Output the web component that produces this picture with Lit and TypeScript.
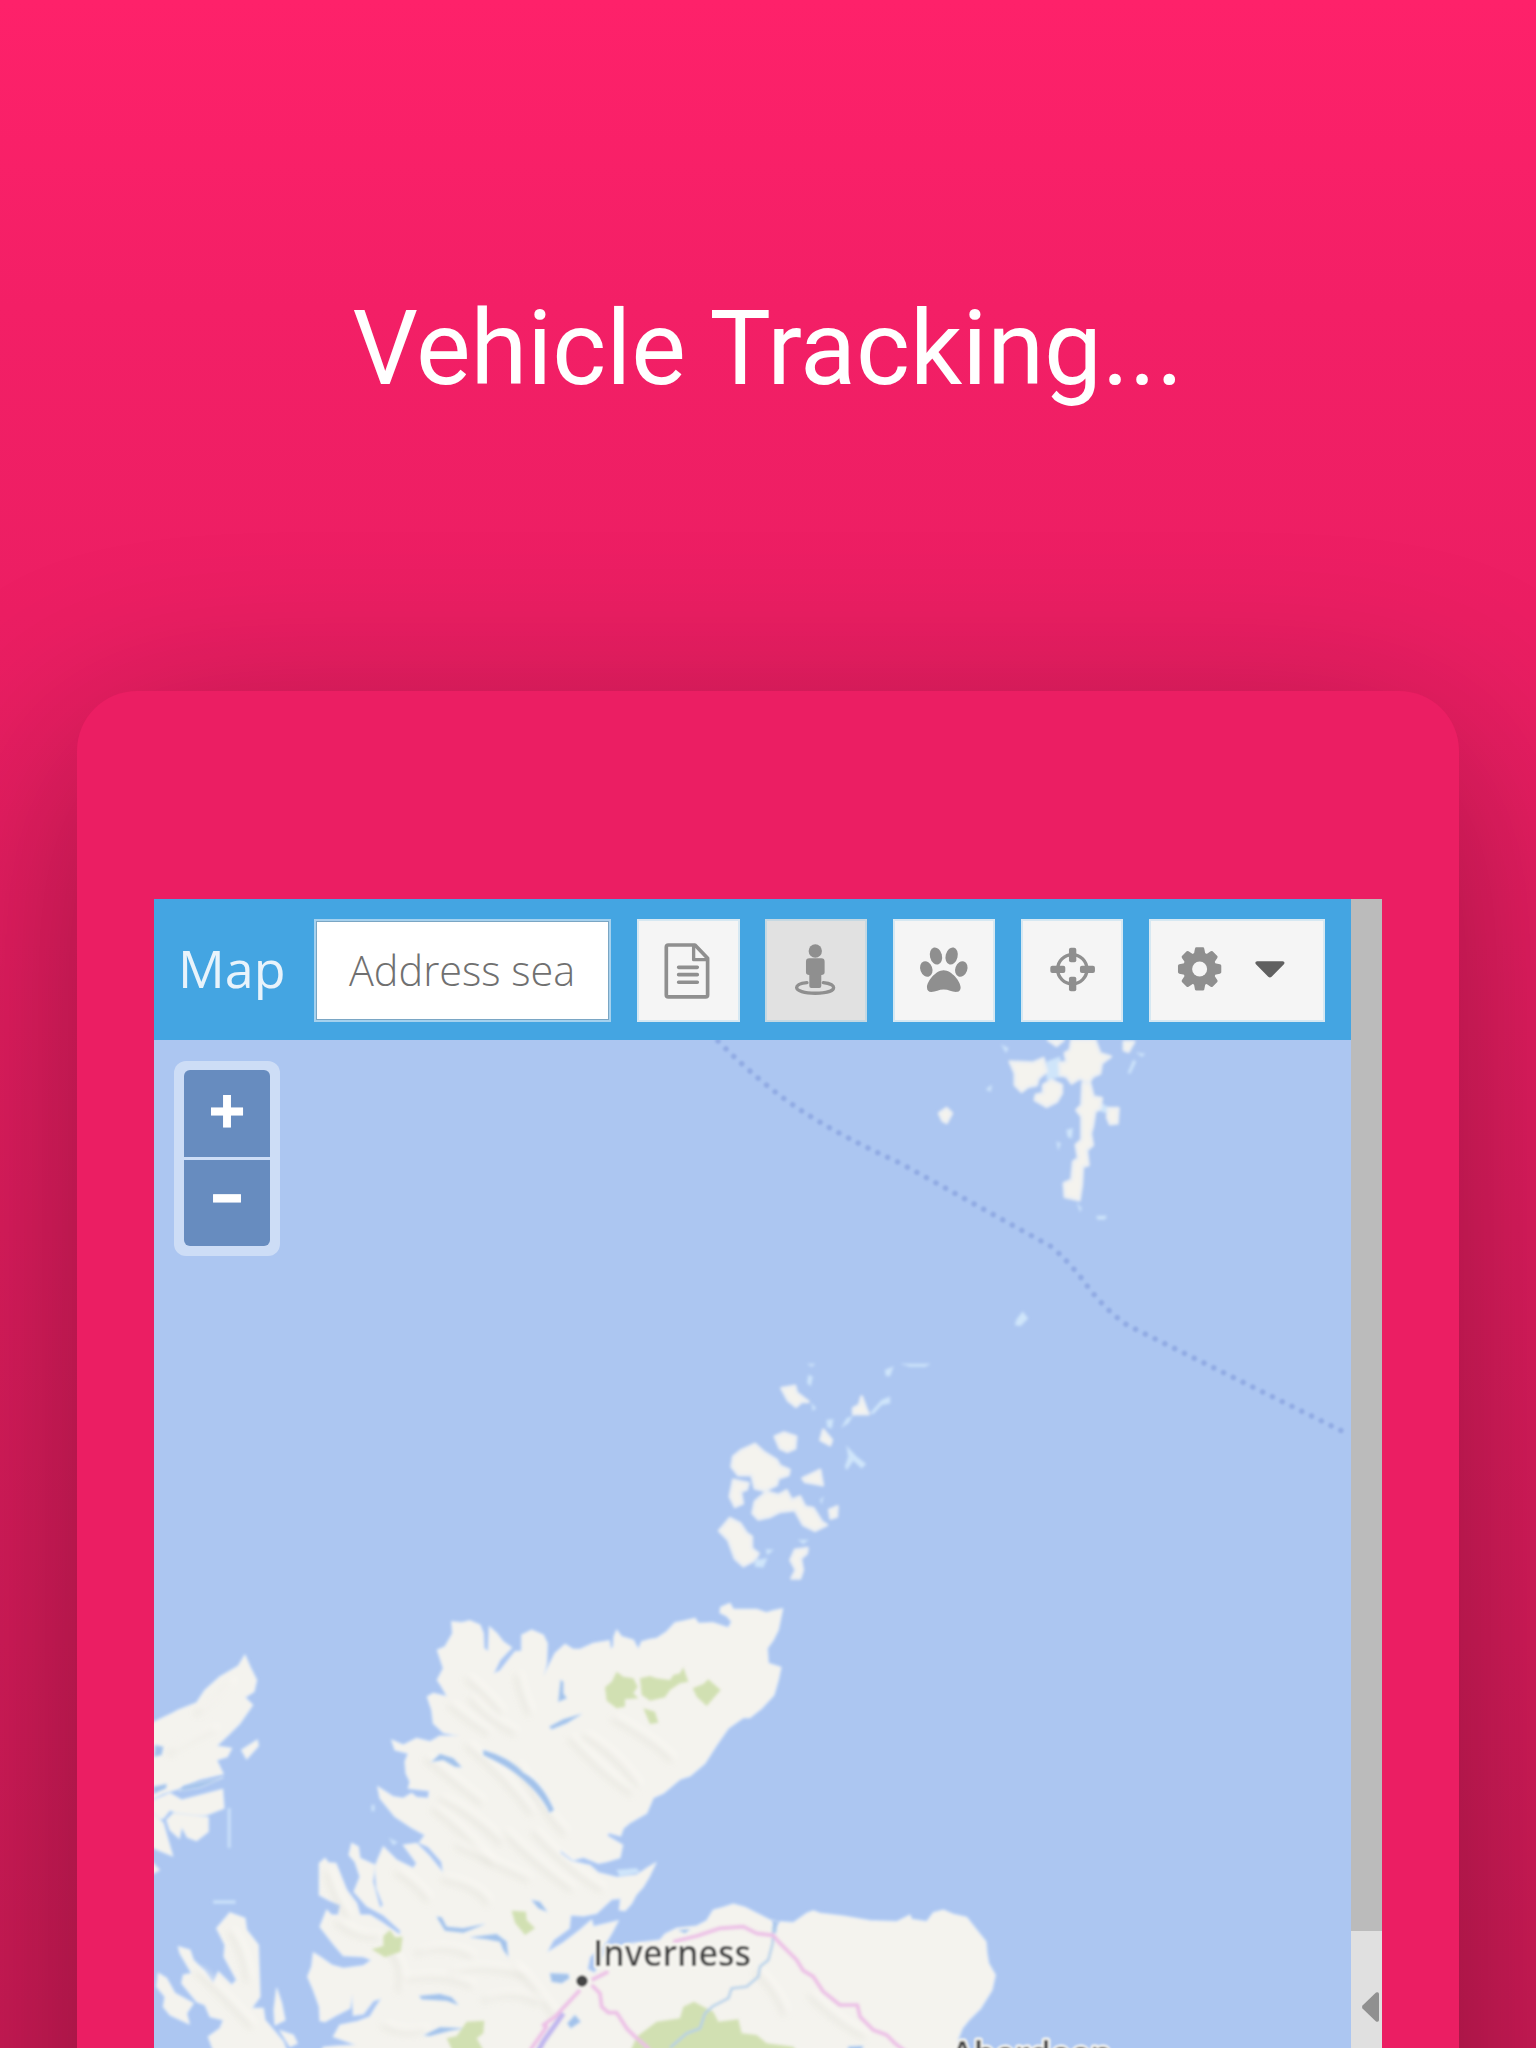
import { LitElement, html, css, svg } from "lit";
import { customElement } from "lit/decorators.js";

const MAINLAND =
  "M905,125L935,128 960,122 990,135 1000,160 1002,205 1015,215 1018,140 1040,160 1060,185 1085,203 1050,240 1030,282 1050,272 1095,215 1115,213 1115,165 1145,150 1180,165 1192,190 1190,250 1180,290 1200,250 1215,220 1245,193 1268,207 1290,208 1330,190 1378,182 1382,208 1390,200 1392,170 1400,150 1415,170 1450,180 1465,208 1475,185 1500,178 1520,175 1550,155 1575,128 1600,123 1635,115 1645,130 1690,128 1735,143 1745,125 1730,108 1710,98 1712,82 1740,70 1750,88 1820,88 1850,98 1870,92 1898,86 1885,150 1870,180 1852,205 1855,250 1893,262 1885,300 1872,345 1835,385 1800,413 1780,413 1735,445 1700,495 1665,550 1620,588 1590,598 1540,640 1510,653 1490,700 1440,728 1420,745 1412,768 1375,758 1372,768 1418,795 1410,833 1370,845 1345,850 1300,832 1270,840 1238,815 1230,808 1232,822 1265,845 1320,856 1345,878 1400,892 1460,885 1490,865 1518,848 1498,890 1480,920 1458,945 1445,970 1425,992 1408,990 1412,955 1385,958 1340,1000 1300,1008 1262,1005 1258,1045 1210,1080 1190,1118 1240,1088 1290,1050 1325,1020 1330,1040 1405,1022 1385,1060 1368,1088 1320,1130 1312,1168 1335,1180 1345,1150 1370,1120 1430,1092 1530,1080 1545,1062 1580,1045 1640,1038 1670,1022 1690,990 1720,982 1750,972 1785,982 1820,1000 1865,1022 1880,1040 1890,1025 1930,1028 1970,1000 1990,992 2010,1000 2080,1008 2160,1022 2240,1025 2280,1005 2285,1018 2330,1025 2350,998 2380,990 2410,1003 2450,1012 2480,1050 2508,1085 2511,1120 2516,1150 2536,1185 2526,1230 2492,1285 2457,1320 2437,1345 2425,1375 2425,1440 500,1440 520,1402 560,1398 620,1395 550,1370 570,1335 620,1325 660,1310 675,1285 695,1255 670,1262 640,1302 610,1306 607,1240 600,1285 555,1308 525,1325 510,1322 508,1280 490,1230 473,1190 485,1160 490,1118 510,1130 545,1155 580,1165 640,1157 665,1140 640,1130 580,1127 550,1092 525,1060 510,1040 530,990 545,1005 565,1005 572,975 540,962 508,945 508,850 525,835 535,848 558,850 590,930 620,970 630,1005 660,1005 700,1030 750,1065 752,1052 700,1005 650,978 612,935 630,890 615,845 597,825 605,790 625,800 630,835 675,855 668,905 690,985 700,975 680,925 675,860 685,835 700,800 740,840 790,865 800,850 760,795 800,790 840,830 880,880 875,845 835,800 808,788 825,765 780,740 735,710 690,655 683,620 730,650 760,655 785,640 800,652 835,655 838,632 775,625 780,605 768,580 765,545 775,520 735,510 725,480 760,495 800,475 840,485 870,468 930,468 880,458 850,430 845,390 832,350 850,340 892,350 875,320 862,300 880,265 862,210 885,200 908,160Z";

const ISLES = [
  // Lewis and Harris
  "M0,432L70,398 85,390 140,368 165,330 210,290 265,258 285,225 300,260 320,300 312,335 285,352 308,375 270,430 235,465 200,498 245,505 232,530 200,540 220,582 150,598 90,625 40,640 0,660Z",
  "M0,665L60,640 95,660 218,628 222,685 170,705 100,708 60,690 40,715 0,720Z",
  "M70,700L175,712 175,755 140,782 112,772 95,740 88,775 60,750 50,720Z",
  "M0,690L40,730 68,828 30,812 0,800ZM0,840L28,870 0,885Z",
  "M275,510L322,480 325,498 290,537Z",
  // Skye
  "M200,1045L240,998 285,1015 290,1050 325,1095 330,1250 305,1285 340,1285 345,1320 400,1385 420,1440 200,1440 175,1370 210,1345 220,1320 180,1310 165,1275 140,1265 95,1210 100,1185 125,1180 90,1120 85,1100 120,1110 130,1140 165,1175 190,1210 205,1175 245,1215 260,1200 222,1130 225,1095Z",
  "M25,1180L50,1195 75,1240 130,1270 110,1300 118,1332 60,1305 40,1280 45,1250 20,1220Z",
  "M380,1225L395,1270 405,1320 375,1335 372,1290ZM390,1352L430,1365 442,1390 420,1400Z",
];

const ORKNEY = [
  "M225,312L250,335 290,360 300,378 328,390 325,405 295,415 290,435 255,452 225,445 215,405 175,405 155,380 160,350 185,330Z",
  "M160,420L205,430 200,448 182,455 188,490 165,500 150,470Z",
  "M225,485L260,455 295,465 320,452 335,480 360,470 375,500 400,505 425,545 440,555 405,572 370,555 345,510 300,515 270,530 235,538 218,520Z",
  "M118,572L150,535 180,550 200,580 215,590 215,625 235,640 225,660 190,678 165,655 145,600Z",
  "M305,145L345,138 350,158 385,185 365,185 348,200 325,182Z",
  "M285,290L312,278 348,290 345,325 322,335 300,325Z",
  "M345,630L382,625 380,640 362,655 368,690 360,715 335,715 348,690 332,660Z",
  "M368,415L395,402 420,390 428,435 400,430 375,425Z",
  "M545,170L558,205 565,222 520,222 520,205 538,195ZM430,270L455,300 450,315 422,300ZM448,510L472,500 470,530 452,535Z",
];

const ORKNEY_FAINT = [
  "M385,105L398,110 392,138 382,130ZM440,240L460,238 455,265 442,262ZM500,318L530,350 558,372 545,385 520,362 500,390 495,380 505,350Z",
  "M485,262L500,235 518,228 505,250ZM570,220L605,180 630,170 630,190 605,195 580,222ZM665,72L750,72 735,80 690,80ZM615,90L640,80 630,108 618,108Z",
  "M225,660L262,655 250,682 225,680ZM258,628L280,630 262,645ZM395,190L408,205 398,212ZM355,600L385,600 370,612ZM420,480L430,470 425,492ZM383,72L405,72 395,80Z",
];

const SHETLAND = [
  "M515,30L585,30 600,70 632,80 605,100 600,130 578,140 565,160 540,145 515,160 500,140 480,135 478,100 500,95 495,70 510,60Z",
  "M330,95L400,98 430,85 440,125 415,145 410,165 385,170 365,185 345,165 345,130Z",
  "M430,165L455,150 485,165 485,190 470,215 440,230 405,210 408,195 430,190Z",
  "M548,160L570,160 580,200 605,205 600,235 585,245 578,290 572,310 578,345 560,360 565,405 548,410 545,465 538,510 495,500 492,460 515,450 520,395 535,385 528,345 545,330 545,260 530,240 545,225Z",
  "M625,235L655,235 652,280 630,282 622,262ZM672,35L702,35 685,65 672,60ZM445,30L490,30 470,47Z",
  "M118,250L140,235 155,250 140,278 128,272Z",
];

const SHETLAND_FAINT = [
  "M350,868L368,845 384,865 362,888 345,885ZM500,300L518,295 515,325 503,320ZM470,335L482,340 475,360ZM305,45L325,55 318,68ZM590,558L620,558 615,568 592,568ZM532,520L545,535 540,545Z",
  "M700,90L708,95 690,132 684,128ZM710,68L735,72 725,80ZM258,178L275,165 272,185ZM440,95L480,80 485,140 440,150ZM590,210L630,235 620,250 590,240Z",
];

const FORESTS = [
  "M1365,322L1385,305 1400,275 1420,290 1450,295 1463,320 1450,340 1465,355 1425,358 1425,380 1400,385 1370,362Z",
  "M1470,295L1500,288 1520,295 1560,300 1570,285 1590,280 1600,262 1615,305 1590,310 1560,330 1545,352 1500,362 1475,345Z",
  "M1628,325L1660,312 1675,298 1712,330 1670,378 1640,350ZM1480,385L1515,395 1525,428 1500,432Z",
  "M700,1068L720,1050 735,1072 758,1070 752,1115 705,1132 665,1108 700,1098ZM1085,992L1128,995 1130,1020 1155,1045 1125,1065 1095,1028Z",
  "M890,1375L920,1368 950,1325 1003,1322 1000,1360 980,1375 1000,1410 985,1440 920,1440Z",
  "M1430,1440L1460,1370 1520,1325 1590,1315 1600,1280 1632,1265 1660,1280 1690,1295 1705,1325 1765,1318 1775,1360 1820,1365 1850,1390 1930,1400 1960,1440Z",
];

const LOCHS = [
  "M1000,510C1050,525 1090,545 1120,578C1165,600 1195,650 1212,690L1198,698C1185,665 1150,625 1115,595C1075,560 1040,545 1000,525Z",
  "M1232,300L1240,305 1240,340 1250,355 1225,365ZM1198,440L1240,418 1295,402 1250,430 1205,448Z",
  "M845,545L870,522 910,535 935,562 915,560 880,540ZM1145,960L1170,965 1192,995 1165,985Z",
  "M860,1010L875,1012 890,1040 940,1045 1005,1032 940,1058 885,1052ZM960,1072L1040,1062 1070,1085 1075,1130 1060,1110 1050,1085 1010,1078Z",
  "M808,1248L870,1242 905,1252 925,1275 890,1262 815,1258ZM822,1366L870,1342 940,1345 900,1352 840,1368Z",
  "M1200,1180L1255,1182 1258,1195 1235,1210 1205,1205ZM1275,1305L1292,1325 1262,1345 1252,1330Z",
  "M15,495L40,500 35,525 12,530ZM10,620L50,612 48,625 10,642ZM100,618L220,592 150,622 90,632Z",
  "M1870,1020L1882,1025 1878,1060 1868,1055ZM1585,1050L1620,1048 1605,1060Z",
  "M2095,1400L2140,1398 2120,1440 2090,1440Z",
];

const RIDGES = [
  "M950,300Q1000,340 1050,400", "M1100,290Q1105,330 1135,400", "M960,360Q1010,420 1090,460", "M900,380Q960,430 1010,460",
  "M830,540Q900,600 990,670", "M950,500Q1060,590 1140,700", "M870,660Q960,700 1050,790", "M850,690Q930,750 1020,850",
  "M740,880Q790,910 830,960", "M880,900Q980,920 1010,970", "M920,800Q1020,850 1130,900", "M1060,760Q1150,850 1260,930",
  "M720,1120Q760,1160 745,1230", "M800,1120Q880,1090 960,1130", "M760,1200Q880,1180 960,1220", "M900,1180Q1010,1150 1120,1190",
  "M700,1340Q760,1370 820,1350", "M1000,1260Q1090,1230 1160,1270", "M1100,560Q1180,700 1240,760", "M1260,480Q1360,590 1440,640",
  "M1300,470Q1390,520 1460,620", "M1390,420Q1500,480 1560,540", "M1150,760Q1250,870 1350,930", "M140,400Q190,370 240,310",
  "M60,520Q120,480 190,450", "M240,1060Q280,1120 290,1200", "M140,1180Q200,1230 300,1340", "M530,880Q550,950 590,1010",
  "M560,1030Q620,1080 680,1070", "M1090,1160Q1150,1220 1210,1310", "M1980,1250Q2060,1330 2140,1370", "M1820,1180Q1880,1240 1900,1300",
];

const paths = (ds: string[], cls: string) => ds.map((d) => svg`<path class=${cls} d=${d} />`);

@customElement("coast-map")
export class CoastMap extends LitElement {
  static styles = css`
    :host { display: block; height: 1008px; }
    svg { display: block; width: 1197px; height: 1008px; background: #acc6f1; }
    .land { fill: #f4f3ee; stroke: #d3e5fb; stroke-width: 5; paint-order: stroke; stroke-linejoin: round; }
    .islet { fill: #f4f3ee; stroke: #ebeff3; stroke-width: 9; stroke-linejoin: round; }
    .faint { fill: #cfe5fa; stroke: #c2daf8; stroke-width: 3; }
    .loch { fill: #a3c2ea; stroke: #e4effa; stroke-width: 4; paint-order: stroke; }
    .forest { fill: #d1e0b2; }
    .ridge { fill: none; stroke: #cfcfc6; stroke-width: 12; stroke-linecap: round; opacity: 0.36; }
    .glow { fill: none; stroke: #fffefa; stroke-width: 14; stroke-linecap: round; opacity: 0.5; }
    .road { fill: none; stroke: #ecbfe6; stroke-width: 11; stroke-linejoin: round; }
    .river { fill: none; stroke: #b4cfea; stroke-width: 7; stroke-linejoin: round; }
    .ness { fill: none; stroke: #bfb5ee; stroke-width: 15; }
    .border { fill: none; stroke: #8aa4e0; stroke-width: 5.5; stroke-linecap: round; stroke-dasharray: 0.1 10.8; opacity: 0.8; }
    .place { font: 600 35.5px "Open Sans", "Noto Sans", sans-serif; fill: #404040; stroke: #f7f6f1; stroke-width: 5; paint-order: stroke; stroke-linejoin: round; }
    .dot { fill: #444; stroke: #f7f6f1; stroke-width: 1.5; }
  `;

  render() {
    return html`<svg viewBox="154 1040 1197 1008">
      <defs>
        <filter id="soft" x="-2%" y="-2%" width="104%" height="104%"><feGaussianBlur stdDeviation="4" /></filter>
        <filter id="softer" x="-5%" y="-5%" width="110%" height="110%"><feGaussianBlur stdDeviation="9" /></filter>
        <filter id="type" x="-5%" y="-20%" width="110%" height="140%"><feGaussianBlur stdDeviation="1" /></filter>
      </defs>
      <path class="border" filter="url(#type)" d="M718,1041Q762,1085 802,1111T900,1163L1052,1247Q1072,1265 1085,1283Q1105,1310 1127,1325L1348,1434" />
      <g transform="translate(150 1580) scale(.33333)">
        <g filter="url(#soft)">
          <path class="land" d=${MAINLAND} />
          ${paths(ISLES, "land")}
          <path class="faint" d="M234,685h7v118h-7ZM190,962h66v8h-66ZM718,775l24,12-12,8ZM665,675h8v18h-8ZM1400,870l60,-5 10,12 -60,12Z" />
        </g>
        <g filter="url(#softer)">
          ${paths(RIDGES, "ridge")}
          <g transform="translate(14 -12)">${paths(RIDGES, "glow")}</g>
        </g>
        <g filter="url(#soft)">
          ${paths(LOCHS, "loch")}
          ${paths(FORESTS, "forest")}
          <path class="river" d="M1870,1040L1868,1090 1855,1140 1830,1160 1825,1190 1790,1220 1745,1225 1735,1255 1690,1278 1665,1300 1650,1345 1610,1360 1560,1404" />
          <path class="ness" d="M1240,1300L1180,1385 1150,1440" />
          <path class="road" d="M1290,1230L1215,1310 1180,1335 1190,1340 1145,1404 1130,1440M1325,1215L1350,1240 1355,1280 1375,1298 1400,1298 1430,1345 1455,1370 1490,1400 1520,1440M1325,1200L1375,1175" />
          <path class="road" d="M1570,1085L1640,1068 1710,1045 1780,1040 1820,1060 1870,1066 1885,1085 1940,1140 1960,1172 1990,1190 2020,1235 2070,1275 2122,1275 2130,1310 2170,1350 2210,1365 2235,1390 2280,1425" />
        </g>
      </g>
      <g transform="translate(680 1340) scale(.33333)" filter="url(#soft)">
        ${paths(ORKNEY, "islet")}
        ${paths(ORKNEY_FAINT, "faint")}
      </g>
      <g transform="translate(900 1030) scale(.33333)" filter="url(#soft)">
        ${paths(SHETLAND_FAINT, "faint")}
        ${paths(SHETLAND, "islet")}
      </g>
      <g filter="url(#type)">
        <circle class="dot" cx="582" cy="1981" r="6.5" />
        <text class="place" x="593" y="1966" textLength="158" lengthAdjust="spacingAndGlyphs">Inverness</text>
        <text class="place" x="951" y="2067" textLength="161" lengthAdjust="spacingAndGlyphs">Aberdeen</text>
      </g>
    </svg>`;
  }
}

// Each icon is drawn in the 308-unit square of its button.
const ICONS = {
  note: svg`<path d="M94,78h80l38,40v110q0,6 -6,6H94q-6,0 -6,-6V84q0,-6 6,-6Z" fill="none" stroke="#8f8f8f" stroke-width="11" stroke-linejoin="round"/><path d="M170,80v42h42" fill="none" stroke="#8f8f8f" stroke-width="10" stroke-linejoin="round"/><path d="M125,145h56M125,167h56M125,190h56" stroke="#8f8f8f" stroke-width="11" stroke-linecap="round"/>`,
  person: svg`<g fill="#8f8f8f"><circle cx="151" cy="96" r="20"/><path d="M133,118h36q10,0 10,10v32q0,8 -10,8v33q0,6 -6,6h-24q-6,0 -6,-6v-33q-10,0 -10,-8v-32q0,-10 10,-10Z"/></g><path d="M126,191C105,193 95,199 95,206C95,216 118,223 151,223C184,223 206,216 206,206C206,199 195,193 175,191" fill="none" stroke="#8f8f8f" stroke-width="10" stroke-linecap="round"/>`,
  paw: svg`<g fill="#8f8f8f"><ellipse cx="129" cy="111" rx="18" ry="26" transform="rotate(-14 129 111)"/><ellipse cx="176" cy="111" rx="18" ry="26" transform="rotate(14 176 111)"/><ellipse cx="100" cy="150" rx="18" ry="24" transform="rotate(-20 100 150)"/><ellipse cx="205" cy="150" rx="18" ry="24" transform="rotate(20 205 150)"/><path d="M152,154C176,154 203,188 203,205C203,216 197,219 189,219C176,219 167,212 152,212C138,212 128,219 115,219C107,219 102,215 102,205C102,188 128,154 152,154Z"/></g>`,
  target: svg`<circle cx="154" cy="151" r="44" fill="none" stroke="#8f8f8f" stroke-width="10"/><g fill="#8f8f8f"><rect x="144" y="86" width="22" height="44" rx="6"/><rect x="144" y="173" width="22" height="44" rx="6"/><rect x="88" y="140" width="45" height="22" rx="6"/><rect x="177" y="140" width="45" height="22" rx="6"/></g>`,
  gear: svg`<g fill="#8f8f8f">${[0, 45, 90, 135].map((a) => svg`<path transform=${`rotate(${a} 152 150)`} d="M142,85h20q3,0 4,4l6,30v62l-6,30q-1,4 -4,4h-20q-3,0 -4,-4l-6,-30v-62l6,-30q1,-4 4,-4Z"/>`)}<circle cx="152" cy="150" r="50"/></g><circle cx="152" cy="150" r="22.500" fill="#f5f5f5"/><path d="M325,127h76q9,1 4,9l-37,37q-5,5 -10,0l-37,-37q-5,-8 4,-9Z" fill="#606060"/>`,
};

@customElement("app-root")
export class AppRoot extends LitElement {
  static styles = css`
    :host { display: block; }
    .page {
      box-sizing: border-box; width: 1536px; height: 2048px; overflow: hidden;
      display: flex; flex-direction: column; align-items: center;
      background: linear-gradient(#fe216a 0%, #f31f66 15%, #ec1e63 30%, #dd1c5d 60%, #cb1a55 100%);
    }
    .headline {
      height: 691px; flex: none; margin: 0; box-sizing: border-box; padding-top: 289px;
      font: 400 103px/120px Roboto, sans-serif; color: #fff; white-space: nowrap;
    }
    .device {
      flex: none; box-sizing: border-box; width: 1382px; height: 1700px; padding: 208px 77px 0;
      border-radius: 60px; background: #eb1e63;
      box-shadow: 0 50px 200px rgba(0, 0, 0, 0.3);
    }
    .screen { display: flex; width: 1228px; height: 1149px; }
    .main { width: 1197px; flex: none; }
    .bar {
      display: flex; align-items: flex-start; box-sizing: border-box; height: 141px;
      padding: 20px 0 0 24px; background: #44a5e2;
    }
    .title { width: 136px; font: 400 52px/98px "Open Sans", sans-serif; color: #e8f3fb; }
    .search {
      box-sizing: border-box; width: 297px; height: 102.600px; margin-right: 26px; padding: 1px 28px 0 33px;
      border: 2px solid #a5d1ee; outline: 1px solid #7aa6c4; outline-offset: -3px; background: #fff;
      font: 300 41.400px/97px "Open Sans", sans-serif; color: #707070; white-space: nowrap; overflow: hidden;
    }
    .tools { display: flex; gap: 25.300px; }
    .tool { box-sizing: border-box; width: 102.600px; height: 102.600px; border: 2px solid #d6e8f2; background: #f5f5f5; }
    .tool svg { display: block; margin: -2px; width: 102.600px; height: 102.600px; overflow: visible; }
    .on { background: #e1e1e1; border-color: #c5d8e2; }
    .wide { width: 176px; }
    .canvas { position: relative; height: 1008px; }
    .zoom {
      position: absolute; left: 20px; top: 21px; box-sizing: border-box; width: 106px; height: 195px;
      padding: 9px 10px 10px; border-radius: 12px; background: rgba(255, 255, 255, 0.4);
      display: flex; flex-direction: column; gap: 3px;
    }
    .step {
      flex: 1; box-sizing: border-box; background: #678cbf; color: #fff; text-align: center;
      font: 700 64px/80px "Open Sans", sans-serif; -webkit-text-stroke: 1px #fff;
    }
    .in { border-radius: 6px 6px 0 0; }
    .out { border-radius: 0 0 6px 6px; line-height: 64px; }
    .rail { flex: 1; display: flex; flex-direction: column; background: #bbb; }
    .track { height: 1032px; }
    .toggle { flex: 1; background: #e0e0e0; }
    .toggle svg { display: block; width: 31px; height: 117px; }
  `;

  render() {
    return html`<div class="page">
      <h1 class="headline">Vehicle Tracking...</h1>
      <div class="device">
        <div class="screen">
          <div class="main">
            <div class="bar">
              <div class="title">Map</div>
              <div class="search">Address sea</div>
              <div class="tools">
                ${(["note", "person", "paw", "target"] as const).map(
                  (k) => html`<div class="tool ${k === "person" ? "on" : ""}"><svg viewBox="0 0 308 308">${ICONS[k]}</svg></div>`
                )}
                <div class="tool wide"><svg viewBox="0 0 308 308">${ICONS.gear}</svg></div>
              </div>
            </div>
            <div class="canvas">
              <coast-map></coast-map>
              <div class="zoom">
                <div class="step in">+</div>
                <div class="step out">–</div>
              </div>
            </div>
          </div>
          <div class="rail">
            <div class="track"></div>
            <div class="toggle">
              <svg viewBox="0 0 31 117"><path d="M11.500,74.500L25,61.500Q28,60.500 28,63V89Q28,91.500 25,90.500L11.500,77.500Q10.500,76 11.500,74.500Z" fill="#909090" /></svg>
            </div>
          </div>
        </div>
      </div>
    </div>`;
  }
}
